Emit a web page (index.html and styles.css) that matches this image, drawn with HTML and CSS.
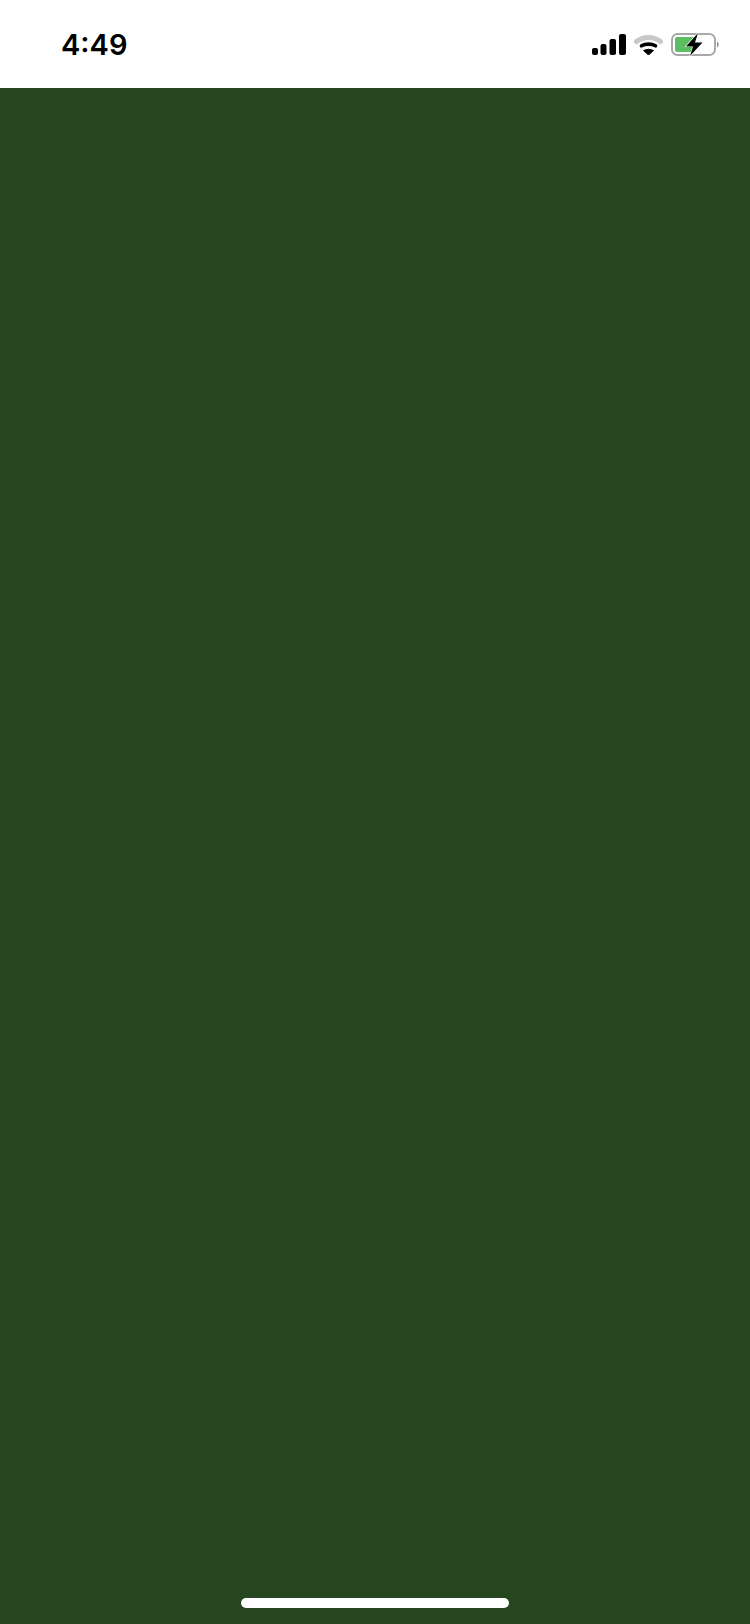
FILE: index.html
```html
<!DOCTYPE html>
<html lang="en">
<head>
    <meta charset="UTF-8">
    <meta name="viewport" content="width=device-width, initial-scale=1.0">
    <title>Splash</title>
    <link rel="stylesheet" href="styles.css">
</head>
<body>

<header class="status-bar">
    <span class="time">4:49</span>
    <div class="status-icons">
        <svg class="signal" width="34" height="21" viewBox="0 0 34 21">
            <rect x="0" y="14" width="6" height="7" rx="2" fill="#000"/>
            <rect x="8.500" y="10" width="6" height="11" rx="2" fill="#000"/>
            <rect x="17.500" y="5" width="6.500" height="16" rx="2" fill="#000"/>
            <rect x="27" y="0" width="7" height="21" rx="2" fill="#000"/>
        </svg>
        <svg class="wifi" width="29" height="21" viewBox="0 0 29 21">
            <path d="M2.500 7.500C9 2 20 2 26.500 7.500" fill="none" stroke="#c8c8c8" stroke-width="5" stroke-linecap="round"/>
            <path d="M7.500 11.800C11.500 9.500 17.500 9.500 21.500 11.800" fill="none" stroke="#000" stroke-width="3.600" stroke-linecap="round"/>
            <path d="M9.500 16.500Q14.500 14 19.500 16.500L14.500 21Z" fill="#000" stroke="#000" stroke-linejoin="round"/>
        </svg>
        <svg class="battery" width="48" height="25" viewBox="-1 -2 48 25">
            <rect x="0" y="0" width="43" height="21" rx="5.500" fill="#fff" stroke="#a8a8a8" stroke-width="2"/>
            <path d="M3 5a2 2 0 0 1 2-2h17v15H5a2 2 0 0 1-2-2z" fill="#5cbd62"/>
            <path d="M45 7.500c1 0.500 1.700 1.700 1.700 3s-0.700 2.500-1.700 3z" fill="#909090"/>
            <path d="M26 -1L14 12.500h7L18 22L30.500 8.500h-7.500z" fill="#000" stroke="#fff" stroke-width="1.200" paint-order="stroke"/>
        </svg>
    </div>
</header>

<main class="screen">
    <div class="home-indicator"></div>
</main>

</body>
</html>
```
FILE: styles.css
```css
html, body {
    height: 100%;
}
body {
    margin: 0;
    display: flex;
    flex-direction: column;
    font-family: Inter, "Liberation Sans", sans-serif;
    background-color: #ffffff;
}
.status-bar {
    height: 88px;
    flex-shrink: 0;
    display: flex;
    justify-content: space-between;
    align-items: center;
    padding: 0 31px 0 61px;
    box-sizing: border-box;
    background-color: #ffffff;
}
.time {
    font-size: 29px;
    font-weight: 600;
    color: #000000;
}
.status-icons {
    display: flex;
    align-items: center;
    gap: 8px;
}
.status-icons svg {
    display: block;
}
.screen {
    flex: 1;
    display: flex;
    flex-direction: column;
    justify-content: flex-end;
    align-items: center;
    padding-bottom: 16px;
    background-color: #264620;
}
.home-indicator {
    width: 268px;
    height: 10px;
    border-radius: 5px;
    background-color: #ffffff;
}
```
